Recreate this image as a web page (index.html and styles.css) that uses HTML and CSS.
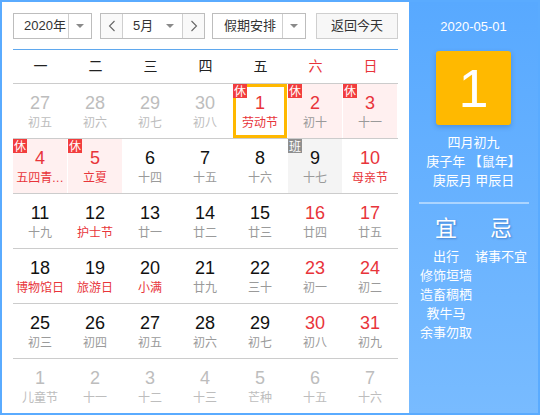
FILE: index.html
```html
<!DOCTYPE html>
<html lang="zh-CN">
<head>
<meta charset="utf-8">
<title>万年历</title>
<link rel="stylesheet" href="styles.css">
</head>
<body>
<div class="cal">
  <div class="main">
    <div class="toolbar">
      <div class="select year">
        <span class="sel-text">2020年</span>
        <span class="sel-arrow"><i class="tri"></i></span>
      </div>
      <div class="select month">
        <span class="nav"><svg width="8" height="12" viewBox="0 0 8 12"><polyline points="6.5,1 1.5,6 6.5,11" fill="none" stroke="#666" stroke-width="1.1"/></svg></span>
        <span class="month-mid"><span class="month-text">5月</span><i class="tri"></i></span>
        <span class="nav"><svg width="8" height="12" viewBox="0 0 8 12"><polyline points="1.5,1 6.5,6 1.5,11" fill="none" stroke="#666" stroke-width="1.1"/></svg></span>
      </div>
      <div class="select holiday">
        <span class="sel-text">假期安排</span>
        <span class="sel-arrow"><i class="tri"></i></span>
      </div>
      <div class="btn">返回今天</div>
    </div>
    <div class="week">
      <span>一</span><span>二</span><span>三</span><span>四</span><span>五</span><span class="red">六</span><span class="red">日</span>
    </div>
    <div class="row">
      <div class="cell other"><span class="num">27</span><span class="lun">初五</span></div>
      <div class="cell other"><span class="num">28</span><span class="lun">初六</span></div>
      <div class="cell other"><span class="num">29</span><span class="lun">初七</span></div>
      <div class="cell other"><span class="num">30</span><span class="lun">初八</span></div>
      <div class="cell selected"><i class="tag">休</i><span class="num red">1</span><span class="lun fest">劳动节</span></div>
      <div class="cell rest"><i class="tag">休</i><span class="num red">2</span><span class="lun">初十</span></div>
      <div class="cell rest"><i class="tag">休</i><span class="num red">3</span><span class="lun">十一</span></div>
    </div>
    <div class="row">
      <div class="cell rest"><i class="tag">休</i><span class="num red">4</span><span class="lun fest">五四青<span class="dots">...</span></span></div>
      <div class="cell rest"><i class="tag">休</i><span class="num red">5</span><span class="lun fest">立夏</span></div>
      <div class="cell"><span class="num">6</span><span class="lun">十四</span></div>
      <div class="cell"><span class="num">7</span><span class="lun">十五</span></div>
      <div class="cell"><span class="num">8</span><span class="lun">十六</span></div>
      <div class="cell work"><i class="tag tag-work">班</i><span class="num">9</span><span class="lun">十七</span></div>
      <div class="cell"><span class="num red">10</span><span class="lun fest">母亲节</span></div>
    </div>
    <div class="row">
      <div class="cell"><span class="num">11</span><span class="lun">十九</span></div>
      <div class="cell"><span class="num">12</span><span class="lun fest">护士节</span></div>
      <div class="cell"><span class="num">13</span><span class="lun">廿一</span></div>
      <div class="cell"><span class="num">14</span><span class="lun">廿二</span></div>
      <div class="cell"><span class="num">15</span><span class="lun">廿三</span></div>
      <div class="cell"><span class="num red">16</span><span class="lun">廿四</span></div>
      <div class="cell"><span class="num red">17</span><span class="lun">廿五</span></div>
    </div>
    <div class="row">
      <div class="cell"><span class="num">18</span><span class="lun fest">博物馆日</span></div>
      <div class="cell"><span class="num">19</span><span class="lun fest">旅游日</span></div>
      <div class="cell"><span class="num">20</span><span class="lun fest">小满</span></div>
      <div class="cell"><span class="num">21</span><span class="lun">廿九</span></div>
      <div class="cell"><span class="num">22</span><span class="lun">三十</span></div>
      <div class="cell"><span class="num red">23</span><span class="lun">初一</span></div>
      <div class="cell"><span class="num red">24</span><span class="lun">初二</span></div>
    </div>
    <div class="row">
      <div class="cell"><span class="num">25</span><span class="lun">初三</span></div>
      <div class="cell"><span class="num">26</span><span class="lun">初四</span></div>
      <div class="cell"><span class="num">27</span><span class="lun">初五</span></div>
      <div class="cell"><span class="num">28</span><span class="lun">初六</span></div>
      <div class="cell"><span class="num">29</span><span class="lun">初七</span></div>
      <div class="cell"><span class="num red">30</span><span class="lun">初八</span></div>
      <div class="cell"><span class="num red">31</span><span class="lun">初九</span></div>
    </div>
    <div class="row">
      <div class="cell other"><span class="num">1</span><span class="lun">儿童节</span></div>
      <div class="cell other"><span class="num">2</span><span class="lun">十一</span></div>
      <div class="cell other"><span class="num">3</span><span class="lun">十二</span></div>
      <div class="cell other"><span class="num">4</span><span class="lun">十三</span></div>
      <div class="cell other"><span class="num">5</span><span class="lun">芒种</span></div>
      <div class="cell other"><span class="num">6</span><span class="lun">十五</span></div>
      <div class="cell other"><span class="num">7</span><span class="lun">十六</span></div>
    </div>
  </div>
  <div class="panel">
    <div class="p-date">2020-05-01</div>
    <div class="p-day">1</div>
    <div class="p-lunar">
      <div>四月初九</div>
      <div>庚子年 【鼠年】</div>
      <div>庚辰月 甲辰日</div>
    </div>
    <div class="p-sep"></div>
    <div class="yj">
      <div class="yj-col">
        <div class="yj-title">宜</div>
        <div class="yj-item">出行</div>
        <div class="yj-item">修饰垣墙</div>
        <div class="yj-item">造畜稠栖</div>
        <div class="yj-item">教牛马</div>
        <div class="yj-item">余事勿取</div>
      </div>
      <div class="yj-col">
        <div class="yj-title">忌</div>
        <div class="yj-item">诸事不宜</div>
      </div>
    </div>
  </div>
</div>
</body>
</html>
```
FILE: styles.css
```css
body {
  margin: 0;
  font-family: "Liberation Sans", "Noto Sans CJK SC", sans-serif;
  background: #fff;
}
.cal {
  width: 540px;
  height: 415px;
  box-sizing: border-box;
  border: 2px solid #5aabff;
  display: flex;
}
.main {
  width: 407px;
  padding: 11px 11px 0 11px;
  box-sizing: border-box;
  background: #fff;
}
.toolbar {
  display: flex;
  height: 26px;
  font-size: 13px;
  color: #333;
}
.select {
  display: flex;
  height: 26px;
  box-sizing: border-box;
  border: 1px solid #bdbdbd;
  background: #fff;
}
.sel-text {
  line-height: 24px;
  padding-left: 10px;
  box-sizing: border-box;
  border-right: 1px solid #cfcfcf;
}
.sel-arrow {
  display: flex;
  align-items: center;
  justify-content: center;
}
.tri {
  display: block;
  width: 0;
  height: 0;
  border-left: 4px solid transparent;
  border-right: 4px solid transparent;
  border-top: 4px solid #8a8a8a;
}
.year { width: 79px; margin-right: 8px; }
.year .sel-text { width: 55px; }
.year .sel-arrow { width: 22px; }
.month { width: 105px; margin-right: 7px; }
.nav {
  width: 21px;
  display: flex;
  align-items: center;
  justify-content: center;
  background: #f9f9f9;
}
.month-mid {
  width: 61px;
  box-sizing: border-box;
  border-left: 1px solid #cfcfcf;
  border-right: 1px solid #cfcfcf;
  display: flex;
  align-items: center;
  padding-left: 10px;
}
.month-text { line-height: 24px; width: 33px; }
.holiday { width: 94px; margin-right: 10px; }
.holiday .sel-text { width: 70px; padding-left: 11px; }
.holiday .sel-arrow { width: 22px; }
.btn {
  width: 82px;
  height: 26px;
  box-sizing: border-box;
  border: 1px solid #cfcfcf;
  background: #f7f7f7;
  text-align: center;
  line-height: 24px;
}
.week {
  display: flex;
  margin-top: 10px;
  border-top: 1px solid #5fa8ee;
  height: 34px;
  box-sizing: border-box;
}
.week span {
  width: 55px;
  text-align: center;
  font-size: 14px;
  line-height: 33px;
  color: #222;
}
.week span.red { color: #e8343a; }
.row {
  display: flex;
  height: 55px;
  box-sizing: border-box;
  border-top: 1px solid #cccccc;
}
.cell {
  position: relative;
  width: 55px;
  box-sizing: border-box;
  border-right: 1px solid #fff;
  display: flex;
  flex-direction: column;
  align-items: center;
  padding-top: 9px;
}
.num {
  font-size: 18px;
  line-height: 20px;
  color: #111;
}
.num.red { color: #e8343a; }
.lun {
  width: 100%;
  text-align: center;
  font-size: 12px;
  line-height: 20px;
  color: #9a9a9a;
  white-space: nowrap;
}
.dots { letter-spacing: 0.5px; }
.lun.fest { color: #e8343a; }
.other .num, .other .lun { color: #bdbdbd; }
.rest { background: #fff0f0; }
.work { background: #f4f4f4; }
.selected::after {
  content: "";
  position: absolute;
  left: 0;
  top: 0;
  right: 0;
  bottom: 0;
  border: 3px solid #ffb800;
}
.tag {
  position: absolute;
  left: 0;
  top: 0;
  z-index: 1;
  width: 14px;
  height: 14px;
  font-style: normal;
  font-size: 12px;
  line-height: 14px;
  text-align: center;
  color: #fff;
  background: #f23d3d;
  font-family: "Noto Sans CJK SC", sans-serif;
}
.tag-work { background: #8f8f8f; }
.panel {
  flex: 1;
  display: flex;
  flex-direction: column;
  align-items: center;
  padding-top: 16px;
  background: linear-gradient(#58a9ff, #78bbff);
  color: #fff;
}
.p-date {
  font-size: 13px;
  line-height: 18px;
}
.p-day {
  margin-top: 15px;
  width: 75px;
  height: 74px;
  border-radius: 3px;
  background: #ffb900;
  box-shadow: 0 2px 5px rgba(0, 60, 140, 0.25);
  text-align: center;
  font-size: 54px;
  line-height: 74px;
}
.p-lunar {
  margin-top: 8px;
  text-align: center;
  font-size: 13px;
  line-height: 19px;
}
.p-sep {
  margin-top: 12px;
  width: 110px;
  height: 2px;
  background: rgba(255, 255, 255, 0.45);
}
.yj {
  margin-top: 12px;
  width: 110px;
  display: grid;
  grid-template-columns: 55px 55px;
}
.yj-col {
  display: flex;
  flex-direction: column;
  align-items: center;
}
.yj-title {
  font-size: 22px;
  line-height: 26px;
  margin-bottom: 5px;
  text-shadow: 1px 1px 2px rgba(0, 40, 110, 0.35);
}
.yj-item {
  font-size: 13px;
  line-height: 19px;
  white-space: nowrap;
}
```
